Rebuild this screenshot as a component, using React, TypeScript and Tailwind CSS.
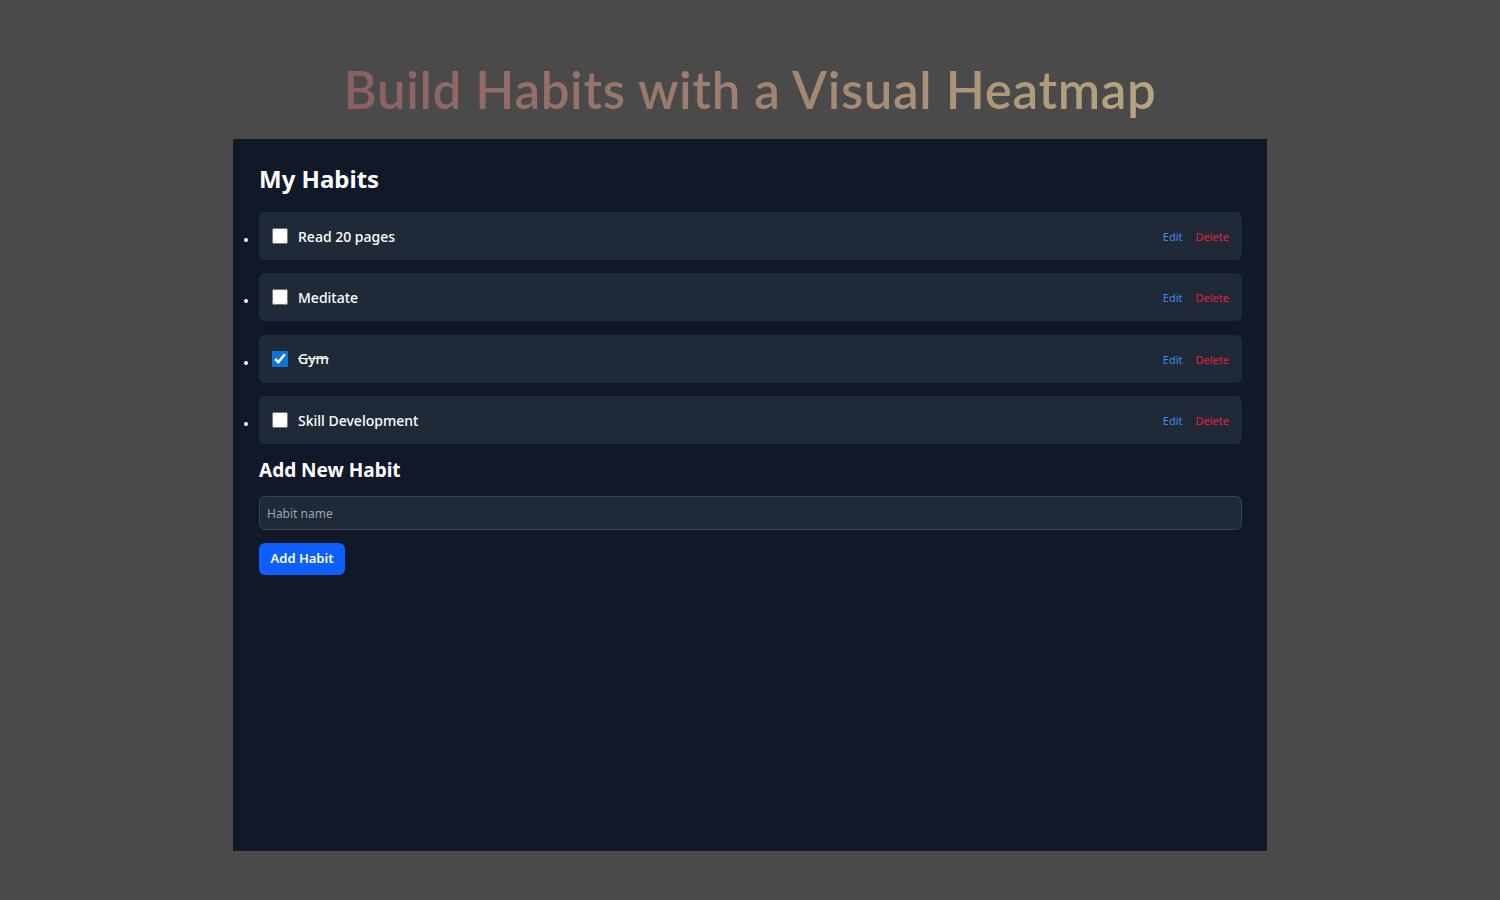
import React from "react";

const habits = [
  { name: "Read 20 pages", done: false },
  { name: "Meditate", done: false },
  { name: "Gym", done: true },
  { name: "Skill Development", done: false },
];

export default function App() {
  return (
    <div
      className="min-h-[900px] w-full bg-[#4a4a4a] flex flex-col items-center"
      style={{ fontFamily: '"Noto Sans", "Open Sans", sans-serif' }}
    >
      <h1
        className="pt-[56px] pb-[15px] text-[51px] leading-[68px] font-semibold bg-gradient-to-r from-[#8a5f60] to-[#b6a67f] bg-clip-text text-transparent tracking-[0.65px]"
        style={{ fontFamily: 'Lato, "Noto Sans", sans-serif' }}
      >
        Build Habits with a Visual Heatmap
      </h1>
      <div className="w-[1034px] h-[712px] bg-[#111827] pl-[26px] pr-[25px] pt-[24px]">
        <h2 className="text-[24px] leading-[32px] font-bold text-white">My Habits</h2>
        <ul className="list-disc text-white mt-[17px] flex flex-col gap-[13.4px] text-[12px]">
          {habits.map((h) => (
            <li key={h.name} className="marker:text-white">
              <div className="h-[48px] bg-[#1f2937] rounded-[6px] flex items-center pl-[13px] pr-[13px]">
                <input
                  type="checkbox"
                  defaultChecked={h.done}
                  className="w-[16px] h-[16px] accent-[#0b74de] m-0"
                />
                <span
                  className={`ml-[10px] text-[14px] font-medium text-white flex-1 ${h.done ? "line-through" : ""}`}
                >
                  {h.name}
                </span>
                <button className="pt-[2px] text-[11px] text-[#3d8ceb]">Edit</button>
                <button className="pt-[2px] ml-[13px] text-[11px] text-[#e2213a]">Delete</button>
              </div>
            </li>
          ))}
        </ul>
        <h3 className="mt-[13px] text-[19px] leading-[26px] font-bold text-white">Add New Habit</h3>
        <input
          placeholder="Habit name"
          className="mt-[13px] block w-full h-[34px] rounded-[6px] border border-[#374151] bg-[#1f2937] px-[7px] text-[12px] text-white placeholder:text-[#9ca3af] outline-none"
        />
        <button className="mt-[13px] h-[32px] w-[86px] rounded-[6px] bg-[#0d5efd] text-white text-[13px] font-semibold">
          Add Habit
        </button>
      </div>
      <div className="flex-1" />
    </div>
  );
}
